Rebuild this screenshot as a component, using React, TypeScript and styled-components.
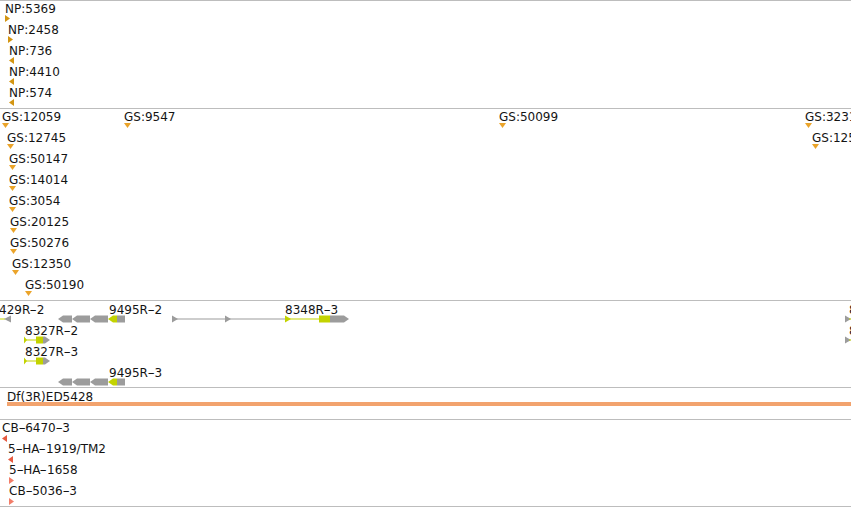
import React from 'react';
import styled, { createGlobalStyle } from 'styled-components';

const GlobalStyle = createGlobalStyle`
  html, body {
    margin: 0;
    padding: 0;
    background: #ffffff;
  }
  body {
    font-family: "DejaVu Sans", "Liberation Sans", sans-serif;
    overflow: hidden;
  }
`;

const GRAY = '#9c9c9c';
const LIME = '#c3d300';
const GOLD = '#d39512';
const ORANGE = '#eba42a';
const RED = '#e65a40';
const SALMON = '#f27d69';

const Browser = styled.div`
  width: 851px;
  height: 507px;
  display: flex;
  flex-direction: column;
  overflow: hidden;
  background: #ffffff;
`;

const Track = styled.section<{ $height: number; $pad: number }>`
  position: relative;
  flex: none;
  box-sizing: content-box;
  height: ${(p) => p.$height - p.$pad}px;
  padding-top: ${(p) => p.$pad}px;
  border-top: 1px solid #bdbdbd;
  overflow: hidden;
  display: flex;
  flex-direction: column;

  &:last-child {
    border-bottom: 1px solid #bdbdbd;
  }
`;

const Lane = styled.div`
  position: relative;
  flex: none;
  height: 21px;
`;

const Feature = styled.div.attrs<{ $x: number }>((p) => ({
  style: { left: `${p.$x}px` },
}))<{ $x: number }>`
  position: absolute;
  top: 0;
  display: flex;
  flex-direction: column;
  align-items: flex-start;
`;

const Label = styled.span`
  font-size: 12px;
  line-height: 12px;
  height: 12px;
  color: #141414;
  white-space: nowrap;
`;

// the viewer's font draws a longer hyphen than DejaVu does
const Hyphen = styled.span`
  display: inline-block;
  width: 6.6px;
  text-align: center;
  transform: scaleX(1.7);
`;

const Marker = styled.svg<{ $gap: number }>`
  display: block;
  flex: none;
  margin-top: ${(p) => p.$gap}px;
`;

const GeneRow = styled.svg`
  position: absolute;
  left: 0;
  top: 11px;
  display: block;
`;

const Bar = styled.div<{ $color: string }>`
  align-self: stretch;
  width: 900px;
  height: 4px;
  margin-top: -1px;
  background: ${(p) => p.$color};
`;

const Text = ({ children }: { children: string }) => (
  <Label>
    {children.split('-').map((part, i) => (
      <React.Fragment key={i}>
        {i > 0 && <Hyphen>-</Hyphen>}
        {part}
      </React.Fragment>
    ))}
  </Label>
);

type Dir = 'left' | 'right' | 'down';

const Arrow = ({ dir, color, gap }: { dir: Dir; color: string; gap: number }) => {
  if (dir === 'down') {
    return (
      <Marker $gap={gap} width={7} height={5} viewBox="0 0 7 5">
        <polygon points="0,0 7,0 3.5,5" fill={color} />
      </Marker>
    );
  }
  const pts = dir === 'right' ? '0,0 5,3.5 0,7' : '5,0 0,3.5 5,7';
  return (
    <Marker $gap={gap} width={5} height={7} viewBox="0 0 5 7">
      <polygon points={pts} fill={color} />
    </Marker>
  );
};

type Item = { x: number; text: string; dir: Dir; color: string };

const MarkerTrack = ({
  height,
  pad,
  gap,
  lanes,
}: {
  height: number;
  pad: number;
  gap: number;
  lanes: Item[][];
}) => (
  <Track $height={height} $pad={pad}>
    {lanes.map((lane, i) => (
      <Lane key={i}>
        {lane.map((f) => (
          <Feature key={f.text} $x={f.x}>
            <Text>{f.text}</Text>
            <Arrow dir={f.dir} color={f.color} gap={gap} />
          </Feature>
        ))}
      </Lane>
    ))}
  </Track>
);

const np: Item[][] = [
  [{ x: 5, text: 'NP:5369', dir: 'right', color: GOLD }],
  [{ x: 8, text: 'NP:2458', dir: 'right', color: GOLD }],
  [{ x: 9, text: 'NP:736', dir: 'left', color: GOLD }],
  [{ x: 9, text: 'NP:4410', dir: 'left', color: GOLD }],
  [{ x: 9, text: 'NP:574', dir: 'left', color: GOLD }],
];

const gs = (x: number, text: string): Item => ({ x, text, dir: 'down', color: ORANGE });

const gsLanes: Item[][] = [
  [gs(2, 'GS:12059'), gs(124, 'GS:9547'), gs(499, 'GS:50099'), gs(805, 'GS:32318')],
  [gs(7, 'GS:12745'), gs(812, 'GS:12522')],
  [gs(9, 'GS:50147')],
  [gs(9, 'GS:14014')],
  [gs(9, 'GS:3054')],
  [gs(10, 'GS:20125')],
  [gs(10, 'GS:50276')],
  [gs(12, 'GS:12350')],
  [gs(25, 'GS:50190')],
];

const cb: Item[][] = [
  [{ x: 2, text: 'CB-6470-3', dir: 'left', color: RED }],
  [{ x: 8, text: '5-HA-1919/TM2', dir: 'left', color: RED }],
  [{ x: 9, text: '5-HA-1658', dir: 'right', color: SALMON }],
  [{ x: 9, text: 'CB-5036-3', dir: 'right', color: SALMON }],
];

// gene model pieces, drawn in an 8px high row
const exonL = (a: number, b: number, c: string) => (
  <polygon key={`l${a}`} points={`${a},4 ${a + 5},0.5 ${b},0.5 ${b},7.5 ${a + 5},7.5`} fill={c} />
);
const exonR = (a: number, b: number, c: string) => (
  <polygon key={`r${a}`} points={`${a},0.5 ${b - 5},0.5 ${b},4 ${b - 5},7.5 ${a},7.5`} fill={c} />
);
const box = (a: number, b: number, c: string) => (
  <rect key={`b${a}`} x={a} y={0.5} width={b - a} height={7} fill={c} />
);
const line = (a: number, b: number, c: string) => (
  <rect key={`n${a}${c}`} x={a} y={3.5} width={b - a} height={1} fill={c} />
);
const tipR = (x: number, c: string, w = 6) => (
  <polygon key={`t${x}${c}`} points={`${x},0.5 ${x + w},4 ${x},7.5`} fill={c} />
);
const tipL = (x: number, c: string) => (
  <polygon key={`u${x}`} points={`${x + 7},0.5 ${x},4 ${x + 7},7.5`} fill={c} />
);

const gene9495 = [
  exonL(58, 72, GRAY),
  exonL(72, 90, GRAY),
  exonL(90, 108, GRAY),
  exonL(108, 117, LIME),
  box(117, 125, GRAY),
];

const gene8327 = [line(24, 36, LIME), tipR(24, LIME, 3), box(36, 43, LIME), exonR(43, 50, GRAY)];

const edge = [tipR(845, GRAY), line(849, 851, LIME)];

type GeneLane = { labels: { x: number; text: string }[]; parts: React.ReactNode[] };

const genes: GeneLane[] = [
  {
    labels: [
      { x: -1, text: '429R-2' },
      { x: 109, text: '9495R-2' },
      { x: 285, text: '8348R-3' },
      { x: 849, text: '8330R-2' },
    ],
    parts: [
      line(0, 5, LIME),
      tipL(4, GRAY),
      ...gene9495,
      line(172, 285, GRAY),
      tipR(172, GRAY),
      tipR(225, GRAY),
      line(285, 319, LIME),
      tipR(285, LIME),
      box(319, 330, LIME),
      exonR(330, 349, GRAY),
      ...edge,
    ],
  },
  {
    labels: [
      { x: 25, text: '8327R-2' },
      { x: 849, text: '8330R-3' },
    ],
    parts: [...gene8327, ...edge],
  },
  { labels: [{ x: 25, text: '8327R-3' }], parts: gene8327 },
  { labels: [{ x: 109, text: '9495R-3' }], parts: gene9495 },
];

export default function App() {
  return (
    <>
      <GlobalStyle />
      <Browser>
        <MarkerTrack height={107} pad={2} gap={0} lanes={np} />
        <MarkerTrack height={191} pad={2} gap={0} lanes={gsLanes} />

        <Track $height={86} $pad={3}>
          {genes.map((g, i) => (
            <Lane key={i}>
              <GeneRow width={851} height={8} viewBox="0 0 851 8">
                {g.parts}
              </GeneRow>
              {g.labels.map((l) => (
                <Feature key={l.text} $x={l.x}>
                  <Text>{l.text}</Text>
                </Feature>
              ))}
            </Lane>
          ))}
        </Track>

        <Track $height={31} $pad={3}>
          <Lane>
            <Feature $x={7}>
              <Label>Df(3R)ED5428</Label>
              <Bar $color="#f2a36e" />
            </Feature>
          </Lane>
        </Track>

        <MarkerTrack height={86} pad={2} gap={1} lanes={cb} />
      </Browser>
    </>
  );
}
